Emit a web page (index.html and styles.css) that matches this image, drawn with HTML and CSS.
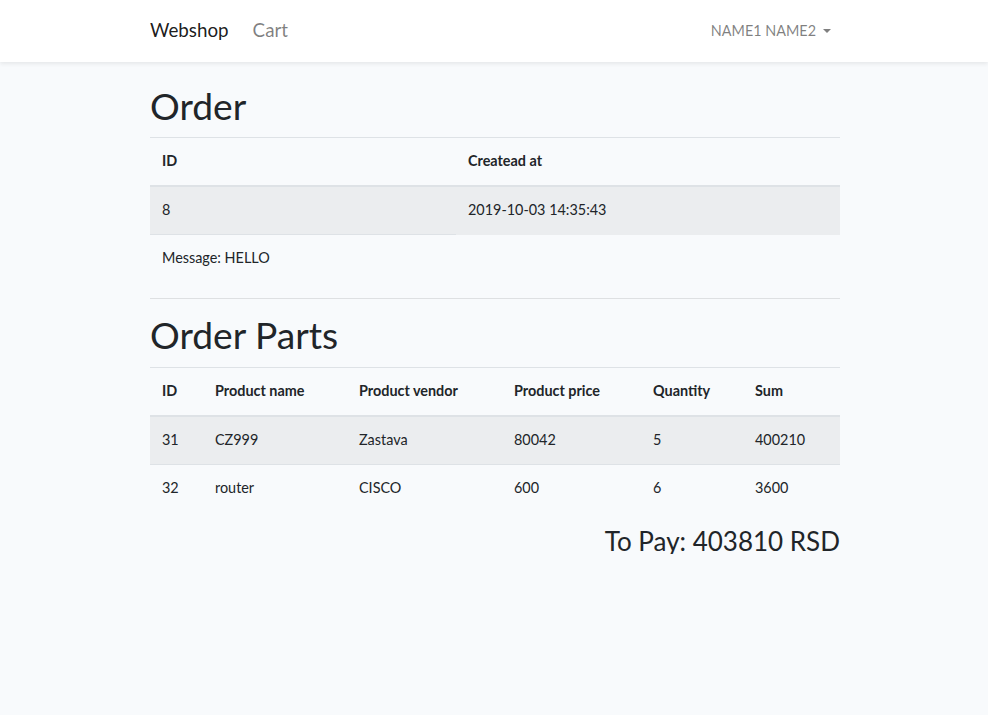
FILE: index.html
```html
<!DOCTYPE html>
<html>
<head>
<meta charset="utf-8">
<title>Webshop</title>
<link rel="stylesheet" href="styles.css">
</head>
<body>
<nav class="navbar">
  <div class="nav-inner">
    <a class="brand">Webshop</a>
    <a class="nav-cart">Cart</a>
    <div class="spacer"></div>
    <a class="user-toggle">NAME1 NAME2<span class="caret"></span></a>
  </div>
</nav>
<main class="main">
  <div class="container">
    <h1 class="title">Order</h1>
    <table class="table table-order">
      <thead>
        <tr><th class="c-oid">ID</th><th class="c-created">Createad at</th></tr>
      </thead>
      <tbody>
        <tr class="striped"><td>8</td><td>2019-10-03 14:35:43</td></tr>
        <tr><td>Message: HELLO</td></tr>
      </tbody>
    </table>
    <hr class="divider">
    <h1 class="title">Order Parts</h1>
    <table class="table table-parts">
      <thead>
        <tr>
          <th class="c-id">ID</th>
          <th class="c-name">Product name</th>
          <th class="c-vendor">Product vendor</th>
          <th class="c-price">Product price</th>
          <th class="c-qty">Quantity</th>
          <th class="c-sum">Sum</th>
        </tr>
      </thead>
      <tbody>
        <tr class="striped"><td>31</td><td>CZ999</td><td>Zastava</td><td>80042</td><td>5</td><td>400210</td></tr>
        <tr><td>32</td><td>router</td><td>CISCO</td><td>600</td><td>6</td><td>3600</td></tr>
      </tbody>
    </table>
    <h3 class="to-pay">To Pay: 403810 RSD</h3>
  </div>
</main>
</body>
</html>
```

FILE: styles.css
```css
html, body {
  margin: 0;
  padding: 0;
}
body {
  background: #f8fafc;
  font-family: "Lato", "Noto Sans", sans-serif;
  font-size: 14.4px;
  line-height: 1.6;
  color: #212529;
  padding-left: 2px;
}
.navbar {
  background: #fff;
  height: 62px;
  margin-left: -2px;
  padding-left: 2px;
  box-shadow: 0 2px 4px rgba(0, 0, 0, 0.075);
}
.nav-inner {
  width: 690px;
  margin: 0 auto;
  height: 100%;
  display: flex;
  align-items: center;
}
.brand {
  font-size: 18.8px;
  line-height: 28px;
  color: rgba(0, 0, 0, 0.9);
  margin-right: 24px;
  margin-bottom: 2px;
}
.nav-cart {
  font-size: 18.8px;
  line-height: 28px;
  color: rgba(0, 0, 0, 0.5);
  margin-bottom: 2px;
}
.spacer {
  flex: 1;
}
.user-toggle {
  color: rgba(0, 0, 0, 0.5);
  font-size: 14.4px;
  display: flex;
  align-items: center;
  margin-right: 9px;
}
.caret {
  display: inline-block;
  margin-left: 7px;
  width: 0;
  height: 0;
  border-top: 4.5px solid rgba(0, 0, 0, 0.5);
  border-left: 4.5px solid transparent;
  border-right: 4.5px solid transparent;
}
.main {
  padding-top: 24px;
}
.container {
  width: 690px;
  margin: 0 auto;
}
.title {
  font-size: 37.2px;
  font-weight: 400;
  line-height: 39.2px;
  margin: 0 0 12px;
}
.table {
  width: 100%;
  border-collapse: collapse;
  table-layout: fixed;
  margin-bottom: 16px;
}
.table th,
.table td {
  padding: 11px 12px 13px;
  text-align: left;
  vertical-align: top;
  border-top: 1px solid #dee2e6;
}
.table th {
  font-weight: 700;
  border-bottom: 2px solid #dee2e6;
}
.table .striped td {
  background: rgba(0, 0, 0, 0.05);
}
.c-oid { width: 282px; }
.c-id { width: 29px; }
.c-name { width: 120px; }
.c-vendor { width: 131px; }
.c-price { width: 115px; }
.c-qty { width: 78px; }
.divider {
  border: 0;
  border-top: 1px solid rgba(0, 0, 0, 0.1);
  margin: 16px 0;
}
.to-pay {
  text-align: right;
  font-size: 26px;
  font-weight: 400;
  line-height: 26.2px;
  margin: 0;
}
```
